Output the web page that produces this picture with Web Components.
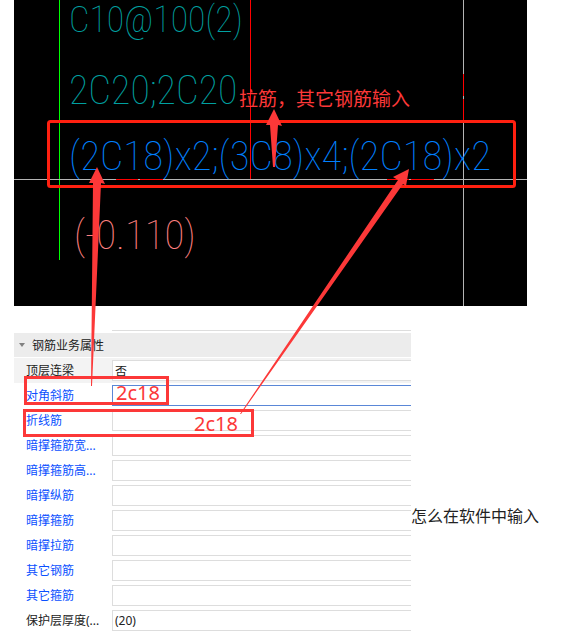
<!DOCTYPE html>
<html lang="zh-CN">
<head>
<meta charset="utf-8">
<title>钢筋业务属性</title>
<style>
    body {
        margin: 0;
        background: #fff;
        color: #222;
        font: 12px/20px "Noto Sans", "Noto Sans CJK SC", sans-serif;
    }
</style>
</head>
<body>
<help-page></help-page>

<script>
class CadText extends HTMLElement {
    constructor() {
        super();
        this.attachShadow({ mode: 'open' }).innerHTML = `
            <style>
                :host {
                    position: absolute;
                    color: var(--cad-color, #00a0a0);
                    font: 100 var(--cad-size, 41px)/48px "Roboto Condensed", Roboto, sans-serif;
                    white-space: nowrap;
                }
            </style>
            <slot></slot>
        `;
    }

    connectedCallback() {
        this.style.left = this.getAttribute('x') + 'px';
        this.style.top = this.getAttribute('y') + 'px';
    }
}

class CadDrawing extends HTMLElement {
    constructor() {
        super();
        this.attachShadow({ mode: 'open' }).innerHTML = `
            <style>
                :host {
                    display: block;
                    position: relative;
                    margin: 0 44px 0 14px;
                    height: 306px;
                    background: #000;
                    overflow: hidden;
                }
                svg {
                    display: block;
                    width: 100%;
                    height: 100%;
                }
            </style>
            <svg shape-rendering="crispEdges" aria-hidden="true">
                <rect x="45" width="1" height="260" fill="#00ff00"/>
                <rect x="236" width="1" height="180" fill="#ff0000"/>
                <rect y="179" width="100%" height="1" fill="#b4b4b4"/>
                <rect x="449" width="1" height="100%" fill="#b4b4b4"/>
                <g fill="#ff0000">
                    <rect x="102" y="179" width="22" height="1"/>
                    <rect x="126" y="179" width="23" height="1"/>
                    <rect x="373" y="179" width="22" height="1"/>
                    <rect x="397" y="179" width="23" height="1"/>
                    <rect x="449" y="74" width="1" height="22"/>
                    <rect x="449" y="99" width="1" height="22"/>
                </g>
            </svg>
            <slot></slot>
        `;
    }
}

class PropertyRow extends HTMLElement {
    constructor() {
        super();
        this.attachShadow({ mode: 'open' }).innerHTML = `
            <style>
                :host {
                    display: grid;
                    grid-template-columns: 98px 1fr;
                    align-items: center;
                    height: 25px;
                    color: #0a50ff;
                }
                :host([plain]) {
                    color: #222;
                }
                :host([fixed]) {
                    background: #f3f3f3;
                }
                label {
                    padding-left: 12px;
                    white-space: nowrap;
                }
                input {
                    box-sizing: border-box;
                    width: 100%;
                    height: 21px;
                    margin: 0;
                    padding: 0 2px;
                    border: 1px solid #ddd;
                    border-right: 0;
                    border-radius: 0;
                    background: #fff;
                    color: #222;
                    font: inherit;
                    outline: 0;
                }
                :host([active]) input {
                    border-color: #5a87d7;
                }
            </style>
            <label for="value"></label>
            <input id="value" type="text">
        `;
        this.shadowRoot.querySelector('label').textContent = this.getAttribute('label');
        this.shadowRoot.querySelector('input').value = this.getAttribute('value') || '';
    }
}

class PropertyPanel extends HTMLElement {
    constructor() {
        super();
        this.attachShadow({ mode: 'open' }).innerHTML = `
            <style>
                :host {
                    display: block;
                    flex: 1;
                }
                .previous {
                    height: 1px;
                    margin: 0 0 2px 98px;
                    background: #ddd;
                }
                button {
                    display: flex;
                    align-items: center;
                    gap: 7px;
                    width: 100%;
                    height: 24px;
                    margin: 0 0 1px;
                    padding: 2px 5px 0;
                    border: 0;
                    background: #ececec;
                    color: #222;
                    font: inherit;
                }
            </style>
            <div class="previous"></div>
            <button type="button" aria-expanded="true">
                <svg width="6" height="6" aria-hidden="true"><path d="M0 0h6L3 4z" fill="#808080"/></svg>
                <span></span>
            </button>
            <slot></slot>
        `;
        this.shadowRoot.querySelector('span').textContent = this.getAttribute('heading');
    }
}

class MarkupLayer extends HTMLElement {
    constructor() {
        super();
        this.attachShadow({ mode: 'open' }).innerHTML = `
            <style>
                :host {
                    position: absolute;
                    inset: 0;
                    pointer-events: none;
                    color: #fc3838;
                }
                svg {
                    display: block;
                    width: 100%;
                    height: 100%;
                }
                text {
                    fill: currentColor;
                    font-size: 20px;
                }
                .note {
                    font-size: 19px;
                }
            </style>
            <svg>
                <g fill="none" stroke="#fc3838" stroke-width="3">
                    <rect x="48.5" y="121.5" width="466" height="65" rx="2" stroke="#ff2010"/>
                    <rect x="25.5" y="377.5" width="142" height="26"/>
                    <rect x="24.5" y="410.5" width="228" height="25"/>
                </g>
                <g fill="#fc3838">
                    <path d="M97 167L105 184L101 183L92 386H91L93 183L89 183Z"/>
                    <path d="M274 109L282 126L278 125L275 167H273L270 125L266 125Z"/>
                    <path d="M409 169L406 186L403 184L241 414H240L398 180L393 177Z"/>
                </g>
                <text class="note" x="239" y="106">拉筋，其它钢筋输入</text>
                <text x="116" y="400">2c18</text>
                <text x="194" y="431">2c18</text>
            </svg>
        `;
    }
}

class HelpPage extends HTMLElement {
    constructor() {
        super();
        this.attachShadow({ mode: 'open' }).innerHTML = `
            <style>
                :host {
                    display: block;
                    position: relative;
                }
                .details {
                    display: flex;
                    padding: 24px 0 2px 14px;
                }
                .stirrup {
                    --cad-size: 36px;
                }
                .main-bar {
                    --cad-size: 40px;
                }
                .blue {
                    --cad-color: #0080ff;
                }
                .pink {
                    --cad-color: #ff8080;
                }
                p {
                    flex: 0 0 160px;
                    margin: 174px 0 0;
                    font-size: 16px;
                    line-height: 24px;
                }
            </style>
            <cad-drawing>
                <cad-text class="stirrup" x="55" y="-4">C10@100(2)</cad-text>
                <cad-text class="main-bar" x="55" y="67">2C20;2C20</cad-text>
                <cad-text class="blue" x="55" y="132">(2C18)x2;(3C8)x4;(2C18)x2</cad-text>
                <cad-text class="pink" x="60" y="211">(-0.110)</cad-text>
            </cad-drawing>
            <div class="details">
                <property-panel heading="钢筋业务属性">
                    <property-row label="顶层连梁" value="否" plain fixed></property-row>
                    <property-row label="对角斜筋" active></property-row>
                    <property-row label="折线筋"></property-row>
                    <property-row label="暗撑箍筋宽..."></property-row>
                    <property-row label="暗撑箍筋高..."></property-row>
                    <property-row label="暗撑纵筋"></property-row>
                    <property-row label="暗撑箍筋"></property-row>
                    <property-row label="暗撑拉筋"></property-row>
                    <property-row label="其它钢筋"></property-row>
                    <property-row label="其它箍筋"></property-row>
                    <property-row label="保护层厚度(..." value="(20)" plain></property-row>
                </property-panel>
                <p>怎么在软件中输入</p>
            </div>
            <markup-layer></markup-layer>
        `;
    }
}

customElements.define('cad-text', CadText);
customElements.define('cad-drawing', CadDrawing);
customElements.define('property-row', PropertyRow);
customElements.define('property-panel', PropertyPanel);
customElements.define('markup-layer', MarkupLayer);
customElements.define('help-page', HelpPage);
</script>
</body>
</html>
